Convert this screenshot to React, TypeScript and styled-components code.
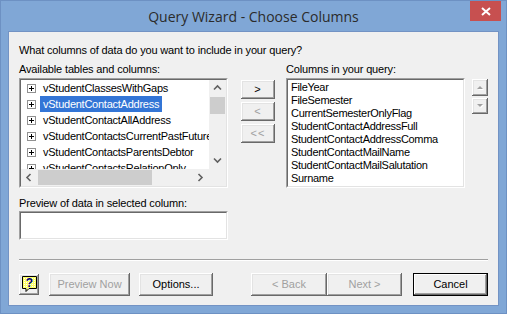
import React from 'react';
import styled, { createGlobalStyle } from 'styled-components';

const tables = [
  'vStudentClassesWithGaps',
  'vStudentContactAddress',
  'vStudentContactAllAddress',
  'vStudentContactsCurrentPastFuture',
  'vStudentContactsParentsDebtor',
  'vStudentContactsRelationOnly',
];

const columns = [
  'FileYear',
  'FileSemester',
  'CurrentSemesterOnlyFlag',
  'StudentContactAddressFull',
  'StudentContactAddressComma',
  'StudentContactMailName',
  'StudentContactMailSalutation',
  'Surname',
];

const Chevron = ({ dir }: { dir: 'up' | 'down' | 'left' | 'right' }) => {
  const pts = {
    up: '1,5.5 4.5,2 8,5.5',
    down: '1,2.5 4.5,6 8,2.5',
    left: '5.5,1 2,4.5 5.5,8',
    right: '2.5,1 6,4.5 2.5,8',
  }[dir];
  return (
    <svg width='9' height='9' viewBox='0 0 9 9'>
      <polyline points={pts} fill='none' stroke='#606060' strokeWidth='1.6' />
    </svg>
  );
};

const Triangle = ({ dir }: { dir: 'up' | 'down' }) => (
  <svg width='9' height='6' viewBox='0 0 9 6'>
    {dir === 'up' ? (
      <>
        <polygon points='2,5 5,2 8,5' fill='#ffffff' />
        <polygon points='1,4 4,1 7,4' fill='#a0a0a0' />
      </>
    ) : (
      <>
        <polygon points='2,2 8,2 5,5' fill='#ffffff' />
        <polygon points='1,1 7,1 4,4' fill='#a0a0a0' />
      </>
    )}
  </svg>
);

const HelpIcon = () => (
  <svg width='15' height='16' viewBox='0 0 15 16'>
    <defs>
      <pattern id='dots' width='2' height='2' patternUnits='userSpaceOnUse'>
        <rect width='2' height='2' fill='#ffff66' />
        <rect width='1' height='1' fill='#ffffff' />
      </pattern>
    </defs>
    <polygon
      points='0.5,0.5 14.5,0.5 14.5,12.5 7,12.5 4,15.5 4,12.5 0.5,12.5'
      fill='url(#dots)'
      stroke='#000000'
      strokeWidth='1'
    />
    <text
      x='7.5'
      y='11'
      textAnchor='middle'
      fontFamily='Liberation Sans, Arial, sans-serif'
      fontWeight='bold'
      fontSize='12'
      fill='#000080'
    >
      ?
    </text>
  </svg>
);

const App = () => {
  return (
    <>
      <GlobalStyle />
      <Window>
        <TitleBar>
          <Title>Query Wizard - Choose Columns</Title>
          <CloseButton>
            <svg width='10' height='9' viewBox='0 0 10 9'>
              <path d='M1 1 L9 8 M9 1 L1 8' stroke='#ffffff' strokeWidth='2' />
            </svg>
          </CloseButton>
        </TitleBar>
        <Client>
          <Prompt>What columns of data do you want to include in your query?</Prompt>
          <MainRow>
            <TableColumn>
              <Label>Available tables and columns:</Label>
              <SunkenFrame $height={110}>
                <SunkenInner>
                  <TreeGrid>
                    <TreeItems>
                      {tables.map((t, i) => (
                        <TreeRow key={t}>
                          <Expander>
                            <svg width='9' height='9' viewBox='0 0 9 9'>
                              <rect x='0.5' y='0.5' width='8' height='8' fill='#ffffff' stroke='#919191' />
                              <path d='M2 4.5 H7 M4.5 2 V7' stroke='#000000' strokeWidth='1' />
                            </svg>
                          </Expander>
                          <TreeLabel $selected={i === 1}>{t}</TreeLabel>
                        </TreeRow>
                      ))}
                    </TreeItems>
                    <VScroll>
                      <ArrowCell>
                        <Chevron dir='up' />
                      </ArrowCell>
                      <Thumb $vertical $size={17} />
                      <TrackSpace />
                      <ArrowCell>
                        <Chevron dir='down' />
                      </ArrowCell>
                    </VScroll>
                    <HScroll>
                      <ArrowCell>
                        <Chevron dir='left' />
                      </ArrowCell>
                      <Thumb $size={114} />
                      <TrackSpace />
                      <ArrowCell>
                        <Chevron dir='right' />
                      </ArrowCell>
                    </HScroll>
                    <Corner />
                  </TreeGrid>
                </SunkenInner>
              </SunkenFrame>
            </TableColumn>

            <MoveButtons>
              <MoveButton>&gt;</MoveButton>
              <MoveButton $disabled>&lt;</MoveButton>
              <MoveButton $disabled>&lt;&lt;</MoveButton>
            </MoveButtons>

            <QueryColumn>
              <Label>Columns in your query:</Label>
              <SunkenFrame $height={110}>
                <SunkenInner>
                  <ColumnList>
                    {columns.map((c) => (
                      <ColumnRow key={c}>{c}</ColumnRow>
                    ))}
                  </ColumnList>
                </SunkenInner>
              </SunkenFrame>
            </QueryColumn>

            <OrderButtons>
              <OrderButton $height={17}>
                <Triangle dir='up' />
              </OrderButton>
              <OrderButton $height={16}>
                <Triangle dir='down' />
              </OrderButton>
            </OrderButtons>
          </MainRow>

          <PreviewSection>
            <PreviewLabel>Preview of data in selected column:</PreviewLabel>
            <SunkenFrame $height={29} $width={209}>
              <SunkenInner />
            </SunkenFrame>
          </PreviewSection>

          <Separator />

          <ButtonRow>
            <HelpButton>
              <HelpIcon />
            </HelpButton>
            <PushButton $width={81} $disabled>
              Preview Now
            </PushButton>
            <PushButton $width={74}>Options...</PushButton>
            <Spacer />
            <PushButton $width={76} $disabled>
              &lt; Back
            </PushButton>
            <PushButton $width={75} $disabled>
              Next &gt;
            </PushButton>
            <DefaultButton>Cancel</DefaultButton>
          </ButtonRow>
        </Client>
      </Window>
    </>
  );
};

export default App;

const GlobalStyle = createGlobalStyle`
  html, body {
    margin: 0;
    padding: 0;
  }
  body {
    width: 507px;
    height: 314px;
    overflow: hidden;
    background: #80a7d6;
  }
  * {
    box-sizing: border-box;
  }
`;

const Window = styled.div`
  width: 507px;
  height: 314px;
  display: flex;
  flex-direction: column;
  background: #80a7d6;
  border: 1px solid #6d91c3;
  font-family: 'Liberation Sans', Arial, sans-serif;
  font-size: 11px;
  color: #000000;
`;

const TitleBar = styled.div`
  height: 30px;
  display: grid;
  grid-template-columns: 1fr auto 1fr;
  align-items: center;
`;

const Title = styled.div`
  grid-column: 2;
  font-family: 'Open Sans', 'Noto Sans', sans-serif;
  font-size: 14px;
  color: #2b2b2b;
  white-space: nowrap;
  margin-top: 1px;
`;

const CloseButton = styled.div`
  grid-column: 3;
  justify-self: end;
  align-self: start;
  width: 31px;
  height: 20px;
  margin-right: 5px;
  background: #c75050;
  display: flex;
  align-items: center;
  justify-content: center;
`;

const Client = styled.div`
  flex: 1;
  margin: 0 7px 7px 7px;
  background: #f0f0f0;
  border: 1px solid #7393c4;
  padding: 11px 10px 9px 10px;
  display: flex;
  flex-direction: column;
`;

const Prompt = styled.div`
  line-height: 14px;
  height: 14px;
  letter-spacing: -0.15px;
`;

const MainRow = styled.div`
  display: flex;
  margin-top: 5px;
`;

const TableColumn = styled.div`
  width: 209px;
  display: flex;
  flex-direction: column;
`;

const QueryColumn = styled.div`
  width: 179px;
  margin-left: 11px;
  display: flex;
  flex-direction: column;
`;

const Label = styled.div`
  height: 16px;
  line-height: 14px;
  letter-spacing: -0.15px;
  white-space: nowrap;
`;

const SunkenFrame = styled.div<{ $height: number; $width?: number }>`
  height: ${(p) => p.$height}px;
  width: ${(p) => (p.$width ? `${p.$width}px` : 'auto')};
  border: 1px solid;
  border-color: #a0a0a0 #ffffff #ffffff #a0a0a0;
`;

const SunkenInner = styled.div`
  height: 100%;
  background: #ffffff;
  border: 1px solid;
  border-color: #696969 #e3e3e3 #e3e3e3 #696969;
  overflow: hidden;
`;

const TreeGrid = styled.div`
  height: 100%;
  display: grid;
  grid-template-columns: 1fr 17px;
  grid-template-rows: 1fr 17px;
`;

const TreeItems = styled.div`
  overflow: hidden;
  min-width: 0;
  min-height: 0;
`;

const TreeRow = styled.div`
  height: 16px;
  display: flex;
  align-items: center;
  padding-left: 6px;
  white-space: nowrap;
`;

const Expander = styled.span`
  width: 9px;
  height: 9px;
  display: flex;
  flex-shrink: 0;
  margin-right: 4px;
`;

const TreeLabel = styled.span<{ $selected?: boolean }>`
  height: 16px;
  line-height: 16px;
  padding: 0 3px;
  letter-spacing: -0.25px;
  font-size: 11px;
  background: ${(p) => (p.$selected ? '#3375d6' : 'transparent')};
  color: ${(p) => (p.$selected ? '#ffffff' : '#000000')};
`;

const VScroll = styled.div`
  background: #f0f0f0;
  display: flex;
  flex-direction: column;
`;

const HScroll = styled.div`
  background: #f0f0f0;
  display: flex;
`;

const ArrowCell = styled.div`
  width: 17px;
  height: 17px;
  flex-shrink: 0;
  display: flex;
  align-items: center;
  justify-content: center;
`;

const Thumb = styled.div<{ $vertical?: boolean; $size: number }>`
  flex-shrink: 0;
  background: #cdcdcd;
  ${(p) =>
    p.$vertical
      ? `height: ${p.$size}px; margin: 0 1px;`
      : `width: ${p.$size}px; margin: 1px 0;`}
`;

const TrackSpace = styled.div`
  flex: 1;
`;

const Corner = styled.div`
  background: #f0f0f0;
`;

const ColumnList = styled.div`
  padding: 1px 3px;
`;

const ColumnRow = styled.div`
  height: 13px;
  line-height: 13px;
  font-size: 11px;
  letter-spacing: -0.3px;
  white-space: nowrap;
`;

const bevel = `
  box-shadow: inset -1px -1px #696969, inset 1px 1px #ffffff,
    inset -2px -2px #a0a0a0, inset 2px 2px #e3e3e3;
`;

const MoveButtons = styled.div`
  width: 34px;
  margin-left: 13px;
  margin-top: 18px;
  display: flex;
  flex-direction: column;
  gap: 3px;
`;

const MoveButton = styled.div<{ $disabled?: boolean }>`
  height: 19px;
  background: #f0f0f0;
  ${bevel}
  display: flex;
  align-items: center;
  justify-content: center;
  font-size: 11px;
  letter-spacing: 1px;
  padding-bottom: 1px;
  color: ${(p) => (p.$disabled ? '#a0a0a0' : '#000000')};
`;

const OrderButtons = styled.div`
  margin-left: 7px;
  margin-top: 17px;
  display: flex;
  flex-direction: column;
  gap: 2px;
`;

const OrderButton = styled.div<{ $height: number }>`
  width: 16px;
  height: ${(p) => p.$height}px;
  background: #f0f0f0;
  ${bevel}
  display: flex;
  align-items: center;
  justify-content: center;
`;

const PreviewSection = styled.div`
  margin-top: 8px;
  display: flex;
  flex-direction: column;
`;

const PreviewLabel = styled.div`
  height: 15px;
  line-height: 14px;
  letter-spacing: -0.15px;
`;

const Separator = styled.div`
  margin-top: 19px;
  height: 2px;
  border-top: 1px solid #a0a0a0;
  border-bottom: 1px solid #ffffff;
`;

const ButtonRow = styled.div`
  margin-top: 12px;
  height: 23px;
  display: flex;
  align-items: flex-start;
`;

const Spacer = styled.div`
  flex: 1;
`;

const HelpButton = styled.div`
  width: 20px;
  height: 21px;
  margin-top: 1px;
  margin-right: 10px;
  background: #f0f0f0;
  ${bevel}
  display: flex;
  align-items: center;
  justify-content: center;
  padding: 0 0 1px 1px;
`;

const PushButton = styled.div<{ $width: number; $disabled?: boolean }>`
  width: ${(p) => p.$width}px;
  height: 23px;
  margin-right: 9px;
  background: #f0f0f0;
  ${bevel}
  display: flex;
  align-items: center;
  justify-content: center;
  padding-bottom: 1px;
  color: ${(p) => (p.$disabled ? '#a0a0a0' : '#000000')};
  &:nth-last-child(3) {
    margin-right: 0;
  }
  &:nth-last-child(2) {
    margin-right: 11px;
  }
`;

const DefaultButton = styled.div`
  width: 75px;
  height: 23px;
  background: #f0f0f0;
  border: 1px solid #000000;
  box-shadow: inset -1px -1px #696969, inset 1px 1px #ffffff,
    inset -2px -2px #a0a0a0;
  display: flex;
  align-items: center;
  justify-content: center;
  padding-bottom: 1px;
`;
